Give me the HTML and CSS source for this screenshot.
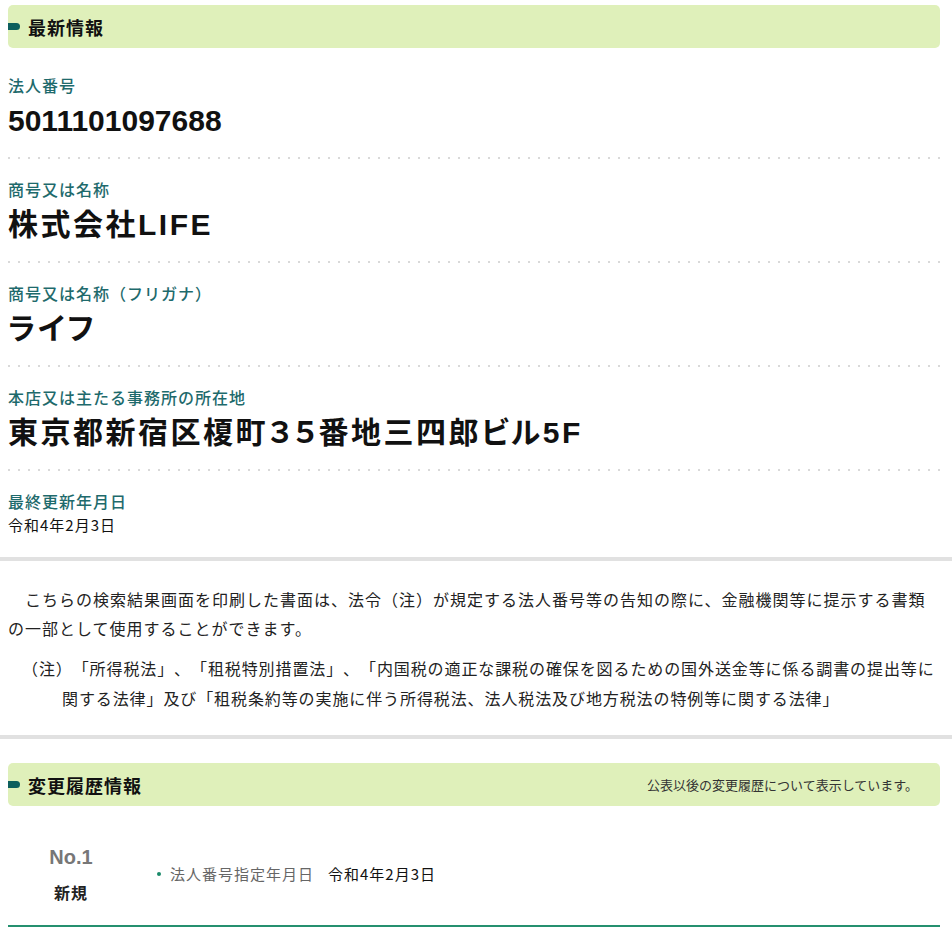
FILE: index.html
```html
<!DOCTYPE html>
<html lang="ja">
<head>
<meta charset="utf-8">
<title>最新情報</title>
<link rel="stylesheet" href="styles.css">
</head>
<body>
<section class="latest">
  <h2 class="bar"><span class="bar-mark"></span><span class="bar-title">最新情報</span></h2>
  <dl class="facts">
    <div class="fact">
      <dt class="fact-label">法人番号</dt>
      <dd class="fact-value number">5011101097688</dd>
    </div>
    <div class="fact">
      <dt class="fact-label">商号又は名称</dt>
      <dd class="fact-value">株式会社LIFE</dd>
    </div>
    <div class="fact">
      <dt class="fact-label">商号又は名称（フリガナ）</dt>
      <dd class="fact-value">ライフ</dd>
    </div>
    <div class="fact">
      <dt class="fact-label">本店又は主たる事務所の所在地</dt>
      <dd class="fact-value">東京都新宿区榎町３５番地三四郎ビル5F</dd>
    </div>
    <div class="fact fact-last">
      <dt class="fact-label">最終更新年月日</dt>
      <dd class="fact-date">令和4年2月3日</dd>
    </div>
  </dl>
</section>

<section class="notice">
  <p class="notice-text">　こちらの検索結果画面を印刷した書面は、法令（注）が規定する法人番号等の告知の際に、金融機関等に提示する書類の一部として使用することができます。</p>
  <p class="notice-note">（注）「所得税法」、「租税特別措置法」、「内国税の適正な課税の確保を図るための国外送金等に係る調書の提出等に関する法律」及び「租税条約等の実施に伴う所得税法、法人税法及び地方税法の特例等に関する法律」</p>
</section>

<section class="history">
  <h2 class="bar"><span class="bar-mark"></span><span class="bar-title">変更履歴情報</span><span class="bar-note">公表以後の変更履歴について表示しています。</span></h2>
  <div class="history-row">
    <div class="history-no">
      <div class="history-num">No.1</div>
      <div class="history-kind">新規</div>
    </div>
    <ul class="history-items">
      <li class="history-item"><span class="history-label">法人番号指定年月日</span><span class="history-value">令和4年2月3日</span></li>
    </ul>
  </div>
</section>
</body>
</html>
```

FILE: styles.css
```css
html, body {
  margin: 0;
  padding: 0;
  background: #ffffff;
}

body {
  font-family: "Noto Sans CJK JP", "Liberation Sans", sans-serif;
  color: #111;
  text-spacing-trim: space-all;
}

.latest,
.notice,
.history {
  padding-left: 8px;
  padding-right: 12px;
}

.latest {
  padding-top: 5px;
  padding-bottom: 20px;
  border-bottom: 4px solid #e1e1e1;
}

.bar {
  display: flex;
  align-items: center;
  height: 43px;
  margin: 0;
  background: #dff0ba;
  border-radius: 5px;
}

.bar-mark {
  width: 12px;
  height: 7px;
  margin-right: 8px;
  background: #0d5f5d;
  border-radius: 0 3.5px 3.5px 0;
  flex: none;
}

.bar-title {
  font-size: 18px;
  font-weight: 700;
  letter-spacing: 1px;
  color: #111;
}

.bar-note {
  margin-left: auto;
  margin-right: 22px;
  font-size: 13px;
  font-weight: 400;
  color: #333;
}

.facts {
  margin: 7px 0 0 0;
}

.fact {
  padding: 18px 0 20px 0;
  background-image: linear-gradient(90deg, #d9d9d9 2px, transparent 2px);
  background-size: 10px 2px;
  background-repeat: repeat-x;
  background-position: left bottom;
}

.fact-last {
  padding-bottom: 0;
  background: none;
}

.fact-label {
  margin: 0;
  font-size: 16px;
  line-height: 24px;
  font-weight: 500;
  letter-spacing: 1px;
  color: #1e6a6c;
}

.fact-value {
  margin: 6px 0 0 0;
  font-family: "Liberation Sans", "Noto Sans CJK JP", sans-serif;
  font-size: 30px;
  line-height: 36px;
  font-weight: 700;
  letter-spacing: 2.5px;
  color: #111;
  font-feature-settings: "palt";
}

.fact-value.number {
  letter-spacing: 0;
}

.fact-date {
  margin: 0;
  font-size: 15px;
  line-height: 24px;
  letter-spacing: 1px;
  color: #111;
}

.notice {
  padding-top: 24px;
  padding-bottom: 22px;
  border-bottom: 4px solid #e1e1e1;
}

.notice-text {
  margin: 0;
  font-size: 16px;
  line-height: 29px;
  letter-spacing: 1px;
  color: #222;
}

.notice-note {
  margin: 10px 0 0 0;
  padding-left: 54px;
  text-indent: -40px;
  font-size: 16px;
  line-height: 30px;
  letter-spacing: 0.9px;
  color: #222;
}

.history {
  padding-top: 24px;
}

.history-row {
  display: flex;
  align-items: center;
  padding: 37px 0 21px 0;
  border-bottom: 2px solid #25906f;
}

.history-no {
  width: 126px;
  flex: none;
  text-align: center;
}

.history-num {
  font-family: "Liberation Sans", sans-serif;
  font-size: 20px;
  line-height: 28px;
  font-weight: 700;
  color: #777;
}

.history-kind {
  margin-top: 9px;
  font-size: 16px;
  line-height: 24px;
  font-weight: 700;
  letter-spacing: 1px;
  color: #222;
}

.history-items {
  list-style: none;
  margin: 0 0 0 23px;
  padding: 0;
}

.history-item {
  display: flex;
  align-items: center;
  font-size: 15px;
  line-height: 24px;
  letter-spacing: 1px;
}

.history-item::before {
  content: "";
  width: 4px;
  height: 4px;
  margin-right: 9px;
  border-radius: 50%;
  background: #1a8a6a;
  flex: none;
}

.history-label {
  color: #666;
}

.history-value {
  margin-left: 14px;
  color: #111;
}
```
